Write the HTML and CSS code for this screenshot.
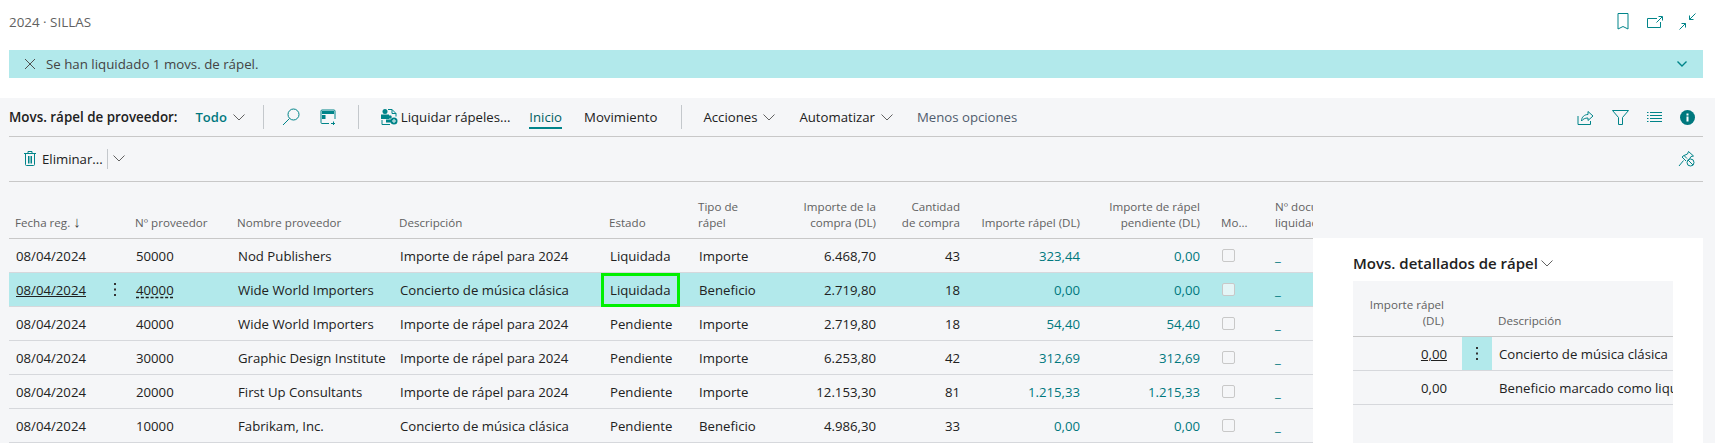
FILE: index.html
```html
<!DOCTYPE html>
<html lang="es">
<head>
<meta charset="utf-8">
<title>2024 · SILLAS</title>
<link rel="stylesheet" href="styles.css">
</head>
<body>
<header class="top">
  <span class="crumb">2024 · SILLAS</span>
  <div class="top-icons">
    <svg class="ic" width="12" height="17" viewBox="0 0 12 17"><path d="M1 .5h10v15.500l-5-2.500-5 2.500z"/></svg>
    <svg class="ic" width="16" height="12" viewBox="0 0 16 12"><path d="M10 2.500H.5v9H13.500V6M9.500 6.500L15 1M11.500 .5h4v4"/></svg>
    <svg class="ic" width="17" height="17" viewBox="0 0 17 17"><path d="M16.500 .5l-6 6M10.500 2.500v4h4M.5 16.500l6-6M2.500 10.500h4v4"/></svg>
  </div>
</header>
<div class="banner">
  <svg class="ic-dark" width="12" height="12" viewBox="0 0 12 12"><path d="M1 1l10 10M11 1L1 11"/></svg>
  <span class="banner-text">Se han liquidado 1 movs. de rápel.</span>
  <svg class="ic banner-chev" width="10" height="6" viewBox="0 0 10 6"><path d="M.5.5L5 5 9.500.5"/></svg>
</div>
<main class="page">
  <div class="bar">
    <strong class="bar-title">Movs. rápel de proveedor:</strong>
    <span class="todo">Todo</span>
    <svg class="chev" width="12" height="7" viewBox="0 0 12 7"><path d="M.5.5L6 6 11.500.5"/></svg>
    <i class="sep sep-a"></i>
    <svg class="ic search" width="18" height="18" viewBox="0 0 18 18"><circle cx="11.500" cy="6.500" r="5.500"/><path d="M7.500 10.500L1 17"/></svg>
    <svg class="ic view" width="16" height="16" viewBox="0 0 16 16"><path d="M9 14.500H2a1 1 0 0 1-1-1V2a1 1 0 0 1 1-1h12a1 1 0 0 1 1 1v8"/><path d="M11 14.500h4M13.500 12.500v4"/><path class="fill" d="M2 2h12v3H2zM2 6h3.500v4H2z"/></svg>
    <i class="sep sep-b"></i>
    <svg class="liq" width="18" height="18" viewBox="0 0 18 18"><path d="M8 1.500h4l4 4v3M12 1.500v4h4M2 12v4.500h8"/><circle class="fill" cx="5" cy="3.500" r="2.500"/><path class="fill" d="M1 6.500h8v4.500H1z"/><circle class="fill" cx="10" cy="9" r="1.800"/><path class="fill" d="M6 11.500h6v3H6z"/><circle class="fill" cx="14" cy="13" r="3.500"/><circle cx="14" cy="13" r="1.200" stroke="#fff"/></svg>
    <span class="liq-text">Liquidar rápeles...</span>
    <span class="tab tab-on">Inicio</span>
    <span class="tab">Movimiento</span>
    <i class="sep sep-c"></i>
    <span class="menu">Acciones</span>
    <svg class="chev" width="12" height="7" viewBox="0 0 12 7"><path d="M.5.5L6 6 11.500.5"/></svg>
    <span class="menu menu-b">Automatizar</span>
    <svg class="chev" width="12" height="7" viewBox="0 0 12 7"><path d="M.5.5L6 6 11.500.5"/></svg>
    <span class="less">Menos opciones</span>
    <div class="bar-right">
      <svg class="ic" width="17" height="15" viewBox="0 0 17 15"><path d="M1 6v8.500h12.500V11M4.500 11c0-4 3-6.500 6.500-6.500V1.500l5 4.500-5 4.500V8C8 8 6 9 4.500 11z"/></svg>
      <svg class="ic" width="17" height="15" viewBox="0 0 17 15"><path d="M.5.500h16l-6 7v7h-4v-7z"/></svg>
      <svg class="ic" width="15" height="11" viewBox="0 0 15 11"><path d="M3 .5h12M3 3.500h12M3 6.500h12M3 9.500h12M0 .5h1.500M0 3.500h1.500M0 6.500h1.500M0 9.500h1.500"/></svg>
      <svg class="info" width="15" height="15" viewBox="0 0 15 15"><circle cx="7.500" cy="7.500" r="7.500"/><path d="M6.500 6.500h2v5h-2zM6.500 3.500h2v2h-2z"/></svg>
    </div>
  </div>
  <div class="subbar">
    <svg class="ic" width="12" height="15" viewBox="0 0 12 15"><path d="M1.500 3v10.500a1 1 0 0 0 1 1h7a1 1 0 0 0 1-1V3M0 2.500h12M4 2.500V.5h4v2M4.500 5v7.500M6 5v7.500M7.500 5v7.500"/></svg>
    <span class="del">Eliminar...</span>
    <i class="sep-sub"></i>
    <svg class="chev" width="12" height="7" viewBox="0 0 12 7"><path d="M.5.5L6 6 11.500.5"/></svg>
    <svg class="ic pin" width="17" height="16" viewBox="0 0 17 16"><path d="M10.500 .5L15.500 5l-2.500.5-1.500 2.500M10.500 .5L9.500 3 6 4.500l3 3M6 4.500L4 6l4 4M5.500 9.500L1 15"/><circle cx="12.500" cy="11.500" r="3.500"/><path d="M10 9l5 5"/></svg>
  </div>
  <div class="content">
    <div class="list">
      <table class="grid">
        <colgroup>
          <col class="c1"><col class="c2"><col class="c3"><col class="c4"><col class="c5"><col class="c6"><col class="c7"><col class="c8"><col class="c9"><col class="c10"><col class="c11"><col class="c12"><col class="c13">
        </colgroup>
        <thead>
          <tr>
            <th>Fecha reg. <span class="sort">↓</span></th><th></th><th>Nº proveedor</th><th>Nombre proveedor</th><th>Descripción</th><th>Estado</th><th>Tipo de<br>rápel</th><th class="r">Importe de la compra (DL)</th><th class="r">Cantidad<br>de compra</th><th class="r">Importe rápel (DL)</th><th class="r">Importe de rápel pendiente (DL)</th><th class="mo">Mo...</th><th class="doc">Nº documento<br>liquidación</th>
          </tr>
        </thead>
        <tbody>
          <tr><td>08/04/2024</td><td></td><td>50000</td><td>Nod Publishers</td><td>Importe de rápel para 2024</td><td>Liquidada</td><td>Importe</td><td class="r">6.468,70</td><td class="r">43</td><td class="r t">323,44</td><td class="r t">0,00</td><td><i class="cb"></i></td><td class="t">_</td></tr>
          <tr class="sel"><td><u>08/04/2024</u></td><td class="dots"><svg class="kebab" width="2" height="13" viewBox="0 0 2 13"><path d="M0 0h2v2H0zM0 5.500h2v2H0zM0 11h2v2H0z"/></svg></td><td><span class="dotted">40000</span></td><td>Wide World Importers</td><td>Concierto de música clásica</td><td class="focus">Liquidada<i class="focus-box"></i></td><td>Beneficio</td><td class="r">2.719,80</td><td class="r">18</td><td class="r t">0,00</td><td class="r t">0,00</td><td><i class="cb"></i></td><td class="t">_</td></tr>
          <tr><td>08/04/2024</td><td></td><td>40000</td><td>Wide World Importers</td><td>Importe de rápel para 2024</td><td>Pendiente</td><td>Importe</td><td class="r">2.719,80</td><td class="r">18</td><td class="r t">54,40</td><td class="r t">54,40</td><td><i class="cb"></i></td><td class="t">_</td></tr>
          <tr><td>08/04/2024</td><td></td><td>30000</td><td>Graphic Design Institute</td><td>Importe de rápel para 2024</td><td>Pendiente</td><td>Importe</td><td class="r">6.253,80</td><td class="r">42</td><td class="r t">312,69</td><td class="r t">312,69</td><td><i class="cb"></i></td><td class="t">_</td></tr>
          <tr><td>08/04/2024</td><td></td><td>20000</td><td>First Up Consultants</td><td>Importe de rápel para 2024</td><td>Pendiente</td><td>Importe</td><td class="r">12.153,30</td><td class="r">81</td><td class="r t">1.215,33</td><td class="r t">1.215,33</td><td><i class="cb"></i></td><td class="t">_</td></tr>
          <tr><td>08/04/2024</td><td></td><td>10000</td><td>Fabrikam, Inc.</td><td>Concierto de música clásica</td><td>Pendiente</td><td>Beneficio</td><td class="r">4.986,30</td><td class="r">33</td><td class="r t">0,00</td><td class="r t">0,00</td><td><i class="cb"></i></td><td class="t">_</td></tr>
        </tbody>
      </table>
    </div>
    <aside class="factbox">
      <h2 class="fb-title">Movs. detallados de rápel<svg class="chev" width="12" height="7" viewBox="0 0 12 7"><path d="M.5.5L6 6 11.500.5"/></svg></h2>
      <div class="fb-body">
        <table class="mini">
          <colgroup><col class="m1"><col class="m2"><col class="m3"></colgroup>
          <thead><tr><th class="r">Importe rápel<br>(DL)</th><th></th><th>Descripción</th></tr></thead>
          <tbody>
            <tr><td class="r"><u>0,00</u></td><td class="dots act"><svg class="kebab" width="2" height="13" viewBox="0 0 2 13"><path d="M0 0h2v2H0zM0 5.500h2v2H0zM0 11h2v2H0z"/></svg></td><td>Concierto de música clásica</td></tr>
            <tr><td class="r">0,00</td><td></td><td>Beneficio marcado como liquidado</td></tr>
          </tbody>
        </table>
      </div>
    </aside>
  </div>
</main>
</body>
</html>
```

FILE: styles.css
```css
* { box-sizing: border-box; }
html, body { margin: 0; height: 443px; overflow: hidden; background: #fff; }
body { font-family: "Open Sans", "Liberation Sans", sans-serif; font-size: 13.2px; color: #212121; }
svg { display: block; flex: none; fill: none; stroke-width: 1; }
.ic, .liq { stroke: #008489; }
.ic-dark { stroke: #505050; }
.fill { fill: #008489; stroke: none; }
.top { height: 50px; display: flex; align-items: flex-start; justify-content: space-between; padding: 13px 19px 0 9px; }
.crumb { font-size: 13.4px; color: #616161; line-height: 18px; }
.top-icons { display: flex; gap: 16px; align-items: center; }
.top-icons svg:first-child { margin-right: 2px; }
.banner { height: 28px; margin: 0 12px 0 9px; background: #b2e9eb; display: flex; align-items: center; padding: 0 16px 0 15px; }
.banner-text { margin-left: 10px; color: #444; font-size: 13.3px; }
.banner-chev { margin-left: auto; stroke-width: 1.4; }
.page { margin-top: 20px; height: 345px; overflow: hidden; background: #f5f6f8; padding: 0 12px 0 9px; }
.bar { height: 38.5px; border-bottom: 1px solid #c8c8c8; display: flex; align-items: center; padding-top: 1px; }
.bar-title { font-weight: 600; font-size: 13.4px; }
.todo { margin-left: 18px; font-weight: 600; font-size: 13px; color: #00787e; }
.chev { stroke: #616161; margin-left: 6px; }
.sep { width: 1px; height: 24px; background: #c4c8cc; }
.sep-a { margin-left: 18px; }
.search { margin-left: 18px; }
.view { margin-left: 20px; }
.sep-b { margin-left: 22px; }
.liq { margin-left: 21px; }
.liq-text { margin-left: 3px; }
.tab { margin-left: 22px; }
.tab-on { margin-left: 19px; color: #005f63; box-shadow: 0 2px 0 #008489; padding-bottom: 1px; margin-top: 1px; }
.sep-c { margin-left: 24px; }
.menu { margin-left: 21px; }
.menu-b { margin-left: 24px; }
.less { margin-left: 24px; color: #505c6d; }
.bar-right { margin-left: auto; margin-right: 8px; display: flex; gap: 18px; align-items: center; }
.info { fill: #00787e; }
.info path { fill: #fff; }
.subbar { height: 45px; border-bottom: 1px solid #c8c8c8; display: flex; align-items: center; padding-left: 15px; }
.del { margin-left: 6px; }
.sep-sub { width: 1px; height: 20px; background: #c4c8cc; margin-left: 4px; }
.subbar .chev { margin-left: 5px; }
.pin { margin-left: auto; margin-right: 8px; }
.content { display: flex; align-items: flex-start; }
.list { width: 1304px; overflow: hidden; flex: none; }
table { border-collapse: collapse; table-layout: fixed; }
.grid { width: 1304px; }
.c1 { width: 91px; } .c2 { width: 29px; } .c3 { width: 102px; } .c4 { width: 162px; }
.c5 { width: 210px; } .c6 { width: 89px; } .c7 { width: 90px; } .c8 { width: 101px; }
.c9 { width: 84px; } .c10 { width: 120px; } .c11 { width: 120px; } .c12 { width: 61px; } .c13 { width: 45px; }
th { font-weight: 400; font-size: 11.6px; line-height: 16px; color: #616161; text-align: left; vertical-align: bottom; padding: 0 7px 7px 6px; }
.grid th { height: 57px; }
.sort { color: #444; font-size: 15px; line-height: 14px; }
td { height: 34px; padding: 0 7px; white-space: nowrap; border-bottom: 1px solid #d6d8dc; border-top: 1px solid #d6d8dc; }
thead th { border-bottom: 1px solid #c8c8c8; }
.r { text-align: right; }
.t { color: #00787e; }
.mo { padding-left: 14px; white-space: nowrap; }
.doc { white-space: nowrap; overflow: hidden; padding-right: 0; padding-left: 7px; }
.sel td { background: #b2e9eb; }
.dots { padding: 0; }
.kebab { fill: #333; stroke: none; margin: 0 auto; }
.dotted { text-decoration: underline dashed; text-underline-offset: 2px; }
.cb { display: block; width: 13px; height: 13px; border: 1px solid #c8c8c8; border-radius: 2px; background: #f5f6f8; margin-left: 8px; }
.sel .cb { background: #e4f5f6; }
.focus { position: relative; }
.focus-box { position: absolute; left: -2px; top: 0; width: 79px; height: 34px; border: 3px solid #00f000; }
.factbox { width: 390px; height: 205px; margin-top: 56px; background: #fff; padding: 0 30px 0 40px; }
.fb-title { margin: 0; height: 43px; font-size: 15px; font-weight: 600; display: flex; align-items: center; padding-top: 8px; }
.fb-title .chev { margin-left: 3px; }
.fb-body { height: 162px; background: #f5f6f8; overflow: hidden; }
.mini { width: 320px; }
.m1 { width: 109px; } .m2 { width: 30px; } .m3 { width: 181px; }
.mini th { height: 56px; padding-bottom: 7px; }
.mini th.r { padding-right: 18px; padding-left: 10px; }
.act { background: #b2e9eb; }
.mini td { overflow: hidden; padding-right: 0; }
.mini td.r { padding-right: 15px; }
```
